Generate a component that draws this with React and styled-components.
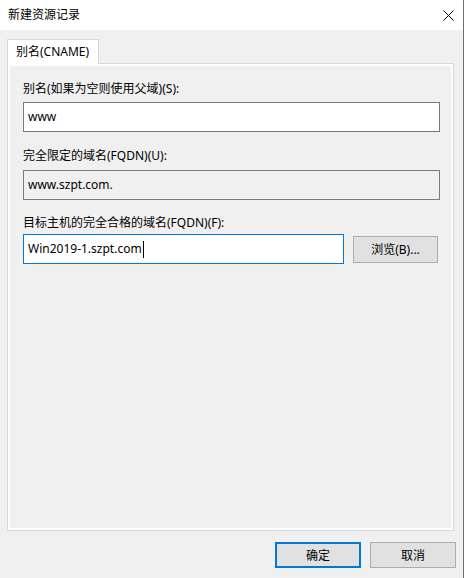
import React from 'react';
import styled, { createGlobalStyle } from 'styled-components';

const GlobalStyle = createGlobalStyle`
  html, body {
    margin: 0;
    padding: 0;
    background: #f0f0f0;
  }
  * {
    box-sizing: border-box;
  }
`;

const FONT = `"Noto Sans", "Noto Sans CJK SC", sans-serif`;

const Window = styled.div`
  width: 464px;
  height: 578px;
  display: flex;
  flex-direction: column;
  background: #f0f0f0;
  border-right: 1px solid #6e6e6e;
  font-family: ${FONT};
  font-size: 12px;
  color: #000;
`;

const TitleBar = styled.div`
  height: 30px;
  flex: none;
  display: flex;
  align-items: center;
  justify-content: space-between;
  padding: 0 8px 0 8px;
  background: #fff;
`;

const Title = styled.span`
  font-size: 12px;
  line-height: 16px;
`;

const CloseButton = styled.div`
  width: 14px;
  height: 14px;
  display: flex;
  align-items: center;
  justify-content: center;
`;

const Body = styled.div`
  flex: none;
  display: flex;
  flex-direction: column;
  padding: 9px 9px 0 7px;
`;

const TabStrip = styled.div`
  display: flex;
  height: 25px;
`;

const Tab = styled.div`
  position: relative;
  z-index: 1;
  width: 92px;
  height: 25px;
  padding: 4px 0 0 8px;
  background: #fff;
  border: 1px solid #d9d9d9;
  border-bottom: none;
  line-height: 16px;
`;

const Panel = styled.div`
  margin-top: -1px;
  height: 468px;
  border: 1px solid #d9d9d9;
  background: #fff;
  padding: 2px;
`;

const Page = styled.div`
  height: 100%;
  background: #f0f0f0;
  padding: 15px 11px 0 13px;
  display: flex;
  flex-direction: column;
`;

const Group = styled.div`
  margin-top: ${p => p.$top || 0}px;
`;

const Label = styled.div`
  line-height: 16px;
  margin-bottom: ${p => p.$gap || 4}px;
`;

const Row = styled.div`
  display: flex;
  align-items: center;
  gap: 9px;
`;

const TextBox = styled.div`
  height: 30px;
  width: ${p => p.$width || '100%'};
  flex: none;
  display: flex;
  align-items: center;
  padding: 0 4px;
  background: ${p => (p.$readOnly ? '#f0f0f0' : '#fff')};
  border: 1px solid ${p => (p.$focused ? '#0078d7' : '#7a7a7a')};
  line-height: 16px;
  white-space: nowrap;
`;

const Caret = styled.span`
  display: inline-block;
  width: 1px;
  height: 17px;
  background: #000;
  margin-left: 1px;
`;

const Button = styled.button`
  height: ${p => p.$height || 26}px;
  width: ${p => p.$width || 86}px;
  padding: 0;
  font-family: ${FONT};
  font-size: 12px;
  color: #000;
  background: #e1e1e1;
  border: ${p => (p.$primary ? '2px solid #0078d7' : '1px solid #adadad')};
`;

const Footer = styled.div`
  flex: none;
  display: flex;
  justify-content: flex-end;
  gap: 9px;
  padding: 11px 7px 0 0;
`;

export default function App() {
  return (
    <>
      <GlobalStyle />
      <Window>
        <TitleBar>
          <Title>新建资源记录</Title>
          <CloseButton>
            <svg width="11" height="11" viewBox="0 0 11 11">
              <path d="M0.5 0.5 L10.5 10.5 M10.5 0.5 L0.5 10.5" stroke="#000" strokeWidth="1" />
            </svg>
          </CloseButton>
        </TitleBar>
        <Body>
          <TabStrip>
            <Tab>别名(CNAME)</Tab>
          </TabStrip>
          <Panel>
            <Page>
              <Group>
                <Label $gap={5}>别名(如果为空则使用父域)(S):</Label>
                <TextBox>www</TextBox>
              </Group>
              <Group $top={16}>
                <Label $gap={6}>完全限定的域名(FQDN)(U):</Label>
                <TextBox $readOnly>www.szpt.com.</TextBox>
              </Group>
              <Group $top={15}>
                <Label $gap={3}>目标主机的完全合格的域名(FQDN)(F):</Label>
                <Row>
                  <TextBox $focused $width="321px">
                    Win2019-1.szpt.com<Caret />
                  </TextBox>
                  <Button $width={85} $height={27}>浏览(B)...</Button>
                </Row>
              </Group>
            </Page>
          </Panel>
        </Body>
        <Footer>
          <Button $primary>确定</Button>
          <Button>取消</Button>
        </Footer>
      </Window>
    </>
  );
}
